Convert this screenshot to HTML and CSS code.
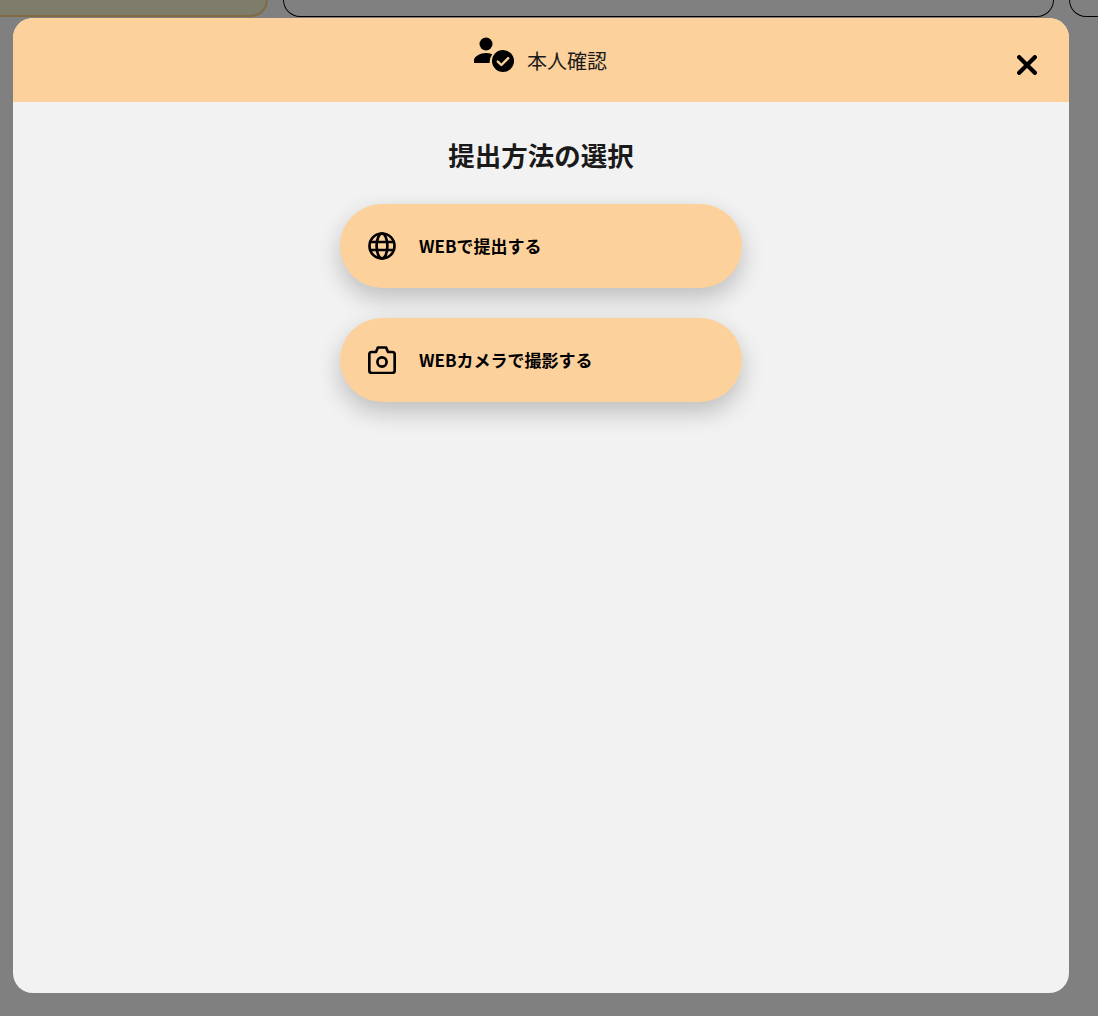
FILE: index.html
```html
<!DOCTYPE html>
<html lang="ja">
<head>
<meta charset="utf-8">
<title>本人確認</title>
<link rel="stylesheet" href="styles.css">
</head>
<body>
<div class="backdrop">
  <div class="bg-pill bg-pill-first"></div>
  <div class="bg-pill bg-pill-main"></div>
  <div class="bg-pill bg-pill-last"></div>
</div>
<section class="modal">
  <header class="modal-header">
    <div class="modal-heading">
      <svg class="person-icon" viewBox="0 0 40 38" width="40" height="38" aria-hidden="true">
        <circle cx="12" cy="7" r="6.5" fill="#000"/>
        <path d="M0 26v-3c0-3.6 6.5-7 12-7 2 0 4.200.4 6.200 1.200A13.500 13.500 0 0 0 15.500 26z" fill="#000"/>
        <circle cx="29" cy="24" r="11" fill="#000"/>
        <path d="M23.800 24.600l3.600 3.400 6.800-6.800" fill="none" stroke="#fdd19c" stroke-width="2.400" stroke-linecap="round" stroke-linejoin="round"/>
      </svg>
      <span class="modal-title">本人確認</span>
    </div>
    <button class="close-btn" aria-label="閉じる">
      <svg viewBox="0 0 20 20" width="20" height="20" aria-hidden="true">
        <path d="M2.200 2.200l15.600 15.600M17.800 2.200L2.200 17.800" fill="none" stroke="#000" stroke-width="4.200" stroke-linecap="square"/>
      </svg>
    </button>
  </header>
  <div class="modal-body">
    <h1 class="section-title">提出方法の選択</h1>
    <button class="choice">
      <svg class="choice-icon" viewBox="0 0 28 28" width="28" height="28" aria-hidden="true">
        <circle cx="14" cy="14" r="12.500" fill="none" stroke="#000" stroke-width="2.700"/>
        <ellipse cx="14" cy="14" rx="5.400" ry="12.500" fill="none" stroke="#000" stroke-width="2.700"/>
        <path d="M2.600 10h22.800M2.600 18h22.800" fill="none" stroke="#000" stroke-width="2.700"/>
      </svg>
      <span class="choice-label">WEBで提出する</span>
    </button>
    <button class="choice">
      <svg class="choice-icon" viewBox="0 0 28 28" width="28" height="28" aria-hidden="true">
        <path d="M3.800 6H8l1.900-4.500h8.200L20 6h4.200a2.500 2.500 0 0 1 2.500 2.500v16a2.500 2.500 0 0 1-2.500 2.500H3.800a2.500 2.500 0 0 1-2.500-2.500v-16A2.500 2.500 0 0 1 3.800 6z" fill="none" stroke="#000" stroke-width="2.700" stroke-linejoin="round"/>
        <circle cx="14" cy="16" r="4.600" fill="none" stroke="#000" stroke-width="2.700"/>
      </svg>
      <span class="choice-label">WEBカメラで撮影する</span>
    </button>
  </div>
</section>
</body>
</html>
```
FILE: styles.css
```css
html, body {
  margin: 0;
  padding: 0;
  height: 100%;
}

body {
  background: #808080;
  font-family: "Noto Sans CJK JP", "Noto Sans", sans-serif;
  overflow: hidden;
  position: relative;
}

.backdrop {
  display: flex;
  gap: 15px;
  height: 17px;
  overflow: hidden;
}

.bg-pill {
  box-sizing: border-box;
  flex: none;
  height: 17px;
  border-radius: 0 0 26px 26px;
  border: 1px solid #000;
  border-top: 0;
}

.bg-pill-first {
  width: 308px;
  height: 17px;
  margin-left: -40px;
  background: #7e7c6b;
  border: 2px solid #7f6a42;
  border-top: 0;
}

.bg-pill-main {
  width: 771px;
  background: #808080;
}

.bg-pill-last {
  width: 190px;
  background: #808080;
}

.modal {
  position: absolute;
  left: 13px;
  top: 18px;
  width: 1056px;
  height: 975px;
  border-radius: 20px;
  background: #f2f2f2;
  overflow: hidden;
  display: flex;
  flex-direction: column;
}

.modal-header {
  position: relative;
  height: 84px;
  flex: none;
  background: #fdd19c;
  display: flex;
  align-items: flex-start;
  justify-content: center;
}

.modal-heading {
  display: flex;
  align-items: flex-start;
  gap: 13px;
  padding: 19px 1px 0 0;
}

.modal-title {
  font-size: 20px;
  line-height: 48px;
  color: #1a1a1a;
}

.close-btn {
  position: absolute;
  left: 1004px;
  top: 37px;
  width: 20px;
  height: 20px;
  padding: 0;
  border: 0;
  background: none;
  display: flex;
}

.modal-body {
  display: flex;
  flex-direction: column;
  align-items: center;
  gap: 30px;
}

.section-title {
  margin: 31px 0 -3px;
  font-size: 26.5px;
  line-height: 44px;
  font-weight: 700;
  color: #1a1a1a;
}

.choice {
  width: 402px;
  height: 84px;
  padding: 0 0 0 28px;
  border: 0;
  border-radius: 42px;
  background: #fdd19c;
  box-shadow: 0 10px 24px rgba(0, 0, 0, 0.22);
  display: flex;
  align-items: center;
  gap: 23px;
  font-family: inherit;
  font-size: 17px;
  font-weight: 700;
  color: #000;
}

.choice-icon {
  flex: none;
}

.choice-label {
  margin-bottom: 2px;
}
```
